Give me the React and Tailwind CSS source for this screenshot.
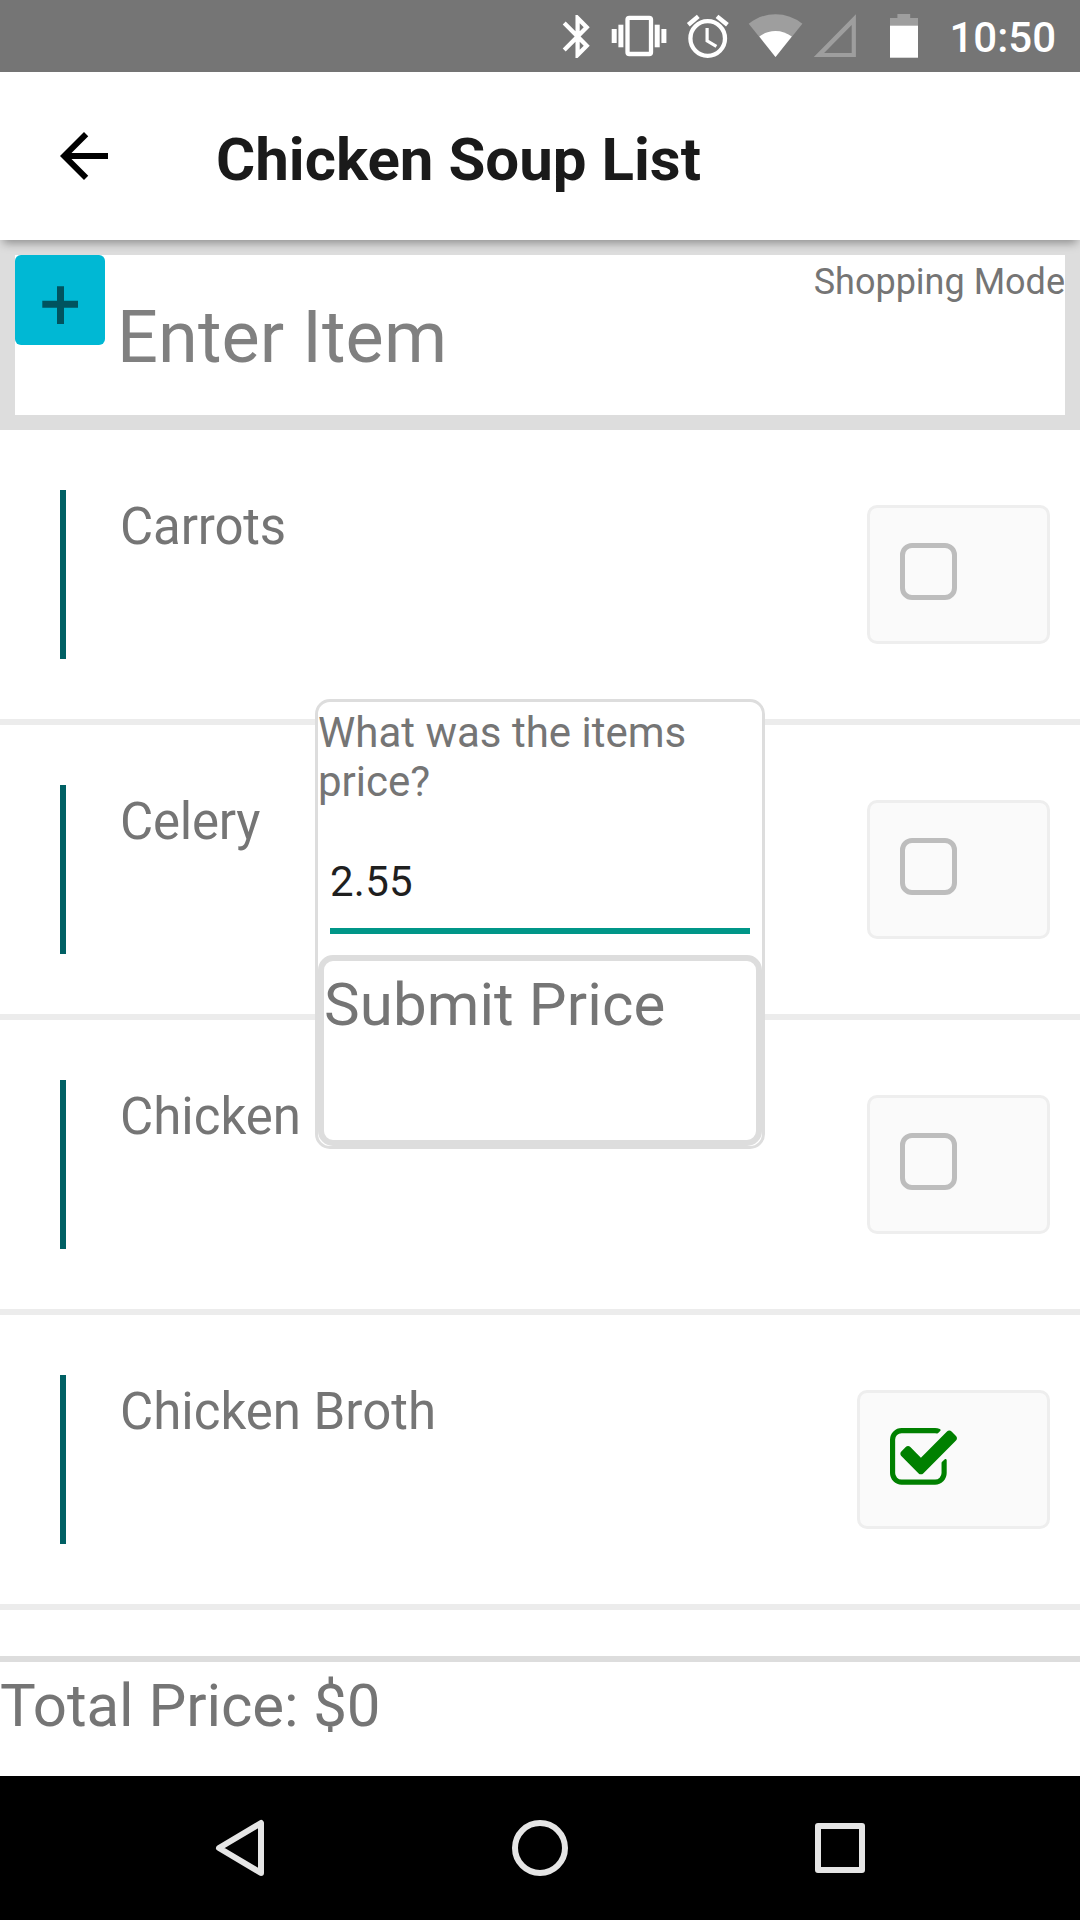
import React from "react";

const items = [
  { name: "Carrots", checked: false, spacing: "tracking-[-0.15px]" },
  { name: "Celery", checked: false, spacing: "tracking-[-0.25px]" },
  { name: "Chicken Thighs", checked: false, spacing: "[word-spacing:1.3px]" },
  { name: "Chicken Broth", checked: true, spacing: "" },
];

function StatusBar() {
  return (
    <div className="flex h-[72px] shrink-0 items-start justify-end bg-[#757575] pr-[24px] text-white">
      <svg className="h-[72px] w-[50px]" viewBox="550 0 50 72" fill="currentColor">
        <path
          transform="translate(552.1 10.7) scale(2.125 2.15)"
          d="M17.71 7.71 12 2h-1v7.59L6.41 5 5 6.41 10.59 12 5 17.59 6.41 19 11 14.41V22h1l5.71-5.71-4.3-4.29 4.3-4.29zM13 5.83l1.88 1.88L13 9.59V5.83zm1.88 10.46L13 18.17v-3.76l1.88 1.88z"
        />
      </svg>
      <svg className="h-[72px] w-[80px]" viewBox="600 0 80 72" fill="currentColor">
        <rect x="611.7" y="29" width="5" height="14" />
        <rect x="618.4" y="24.7" width="5" height="22.6" />
        <rect x="627.5" y="17.8" width="23.5" height="36.2" rx="1.8" fill="none" stroke="currentColor" strokeWidth="4.3" />
        <rect x="654.7" y="24.7" width="5" height="22.6" />
        <rect x="661.4" y="29" width="5" height="14" />
      </svg>
      <svg className="h-[72px] w-[60px]" viewBox="680 0 60 72" fill="none" stroke="currentColor">
        <circle cx="707.7" cy="38.5" r="17.3" strokeWidth="4.3" />
        <path d="M707.1 28v12.8l9.3 5.6" strokeWidth="3.2" />
        <path d="M688.3 24.8l10-8.4M717 16.4l10.4 8.4" strokeWidth="4.4" />
      </svg>
      <svg className="h-[72px] w-[70px]" viewBox="740 0 70 72" fill="currentColor">
        <path d="M775.5 57L748.7 23.8Q760.5 14.3 775.5 14.3T802.4 23.8Z" fill="#9e9e9e" />
        <path d="M775.5 57L759.3 36.6Q766.5 31 775.5 31T791.8 36.6Z" />
      </svg>
      <svg className="h-[72px] w-[60px]" viewBox="810 0 60 72">
        <path fill="#9e9e9e" fillRule="evenodd" d="M813.8 57L855.9 14.3V57ZM824.1 53H851.7V25Z" />
      </svg>
      <svg className="h-[72px] w-[60px]" viewBox="870 0 60 72">
        <path fill="#9e9e9e" d="M890 26v-8h7.4v-4h12.8v4H918v8z" />
        <rect x="890" y="25.7" width="28" height="32" fill="white" />
      </svg>
      <div className="w-[126px] pt-[13px] text-right text-[42px] leading-[49px] font-medium">10:50</div>
    </div>
  );
}

function Header() {
  return (
    <header className="relative z-10 flex h-[168px] shrink-0 items-start bg-white pl-12 shadow-[0_6px_9px_-3px_rgba(0,0,0,0.36)]">
      <svg className="mt-12 size-[72px]" viewBox="0 0 24 24">
        <path d="M20 11H7.83l5.59-5.59L12 4l-8 8 8 8 1.41-1.41L7.83 13H20v-2z" />
      </svg>
      <h1 className="mt-[53px] ml-24 text-[60px] leading-[70px] font-bold text-[#1a1a1a]">Chicken Soup List</h1>
    </header>
  );
}

function AddItem() {
  return (
    <div className="flex h-[190px] shrink-0 items-start border-[15px] border-[#ddd] bg-white">
      <button className="size-[90px] rounded-[6px] bg-[#00b8d4]">
        <svg className="size-[90px]" viewBox="0 0 90 90" fill="#00535f">
          <path d="M42 31.3h7v14.4h14v7H49V69h-7V52.700h-14.700v-7H42z" />
        </svg>
      </button>
      <div className="mt-[41px] ml-[12px] text-[72px] leading-[84px] tracking-[0.1px] text-[#808080]">Enter Item</div>
      <div className="mt-[6px] ml-auto text-[36px] leading-[42px] text-[#757575]">Shopping Mode</div>
    </div>
  );
}

function CheckIcon({ checked }) {
  if (!checked) {
    return <div className="size-[57px] rounded-[12px] border-[5px] border-[#bdbdbd]" />;
  }
  return (
    <svg className="h-[57px] w-[67px]" viewBox="64 128 1664 1408" preserveAspectRatio="xMinYMin meet" fill="#008000">
      <path d="M1472 930v318q0 119-84.500 203.500t-203.500 84.500h-832q-119 0-203.500-84.500t-84.500-203.500v-832q0-119 84.500-203.500t203.500-84.500h832q63 0 117 25 15 7 18 23 3 17-9 29l-49 49q-10 10-23 10-3 0-9-2-23-6-45-6h-832q-66 0-113 47t-47 113v832q0 66 47 113t113 47h832q66 0 113-47t47-113v-254q0-13 9-22l64-64q10-10 23-10 6 0 12 3 20 8 20 29zm231-489l-814 814q-24 24-57 24t-57-24l-430-430q-24-24-24-57t24-57l110-110q24-24 57-24t57 24l263 263 647-647q24-24 57-24t57 24l110 110q24 24 24 57t-24 57z" />
    </svg>
  );
}

function ItemRow({ name, checked, spacing }) {
  return (
    <li className="flex h-[295px] shrink-0 items-start border-b-[6px] border-[#ececec] pt-[60px] pr-[30px] pl-[60px]">
      <div className="flex h-[169px] flex-1 border-l-[6px] border-[#006064] pl-[54px]">
        <span className={`mt-[7px] text-[51px] leading-[60px] text-[#757575] ${spacing}`}>{name}</span>
      </div>
      <button className="mt-[15px] flex h-[139px] items-start rounded-[10px] border-[3px] border-[#eee] bg-[#fafafa] pt-[35px] pr-[90px] pl-[30px]">
        <CheckIcon checked={checked} />
      </button>
    </li>
  );
}

function PriceDialog() {
  return (
    <div className="absolute top-[699px] left-[315px] z-20 flex size-[450px] flex-col rounded-[15px] border-[3px] border-[#ddd] bg-white">
      <p className="mt-[6px] text-[42px] leading-[49px] text-[#757575]">What was the items price?</p>
      <div className="mx-3 mt-[51px] h-[77px] border-b-[6px] border-[#009688] text-[42px] leading-[49px] tracking-[0.25px] text-[#1f1f1f]">
        2.55
      </div>
      <button className="mt-[21px] flex flex-1 items-start rounded-[15px] border-[6px] border-[#ddd] pt-[9px] text-[60px] leading-[70px] tracking-[0.1px] text-[#757575]">
        Submit Price
      </button>
    </div>
  );
}

function NavBar() {
  return (
    <nav className="flex h-[144px] shrink-0 items-center justify-center gap-[240px] bg-black">
      <svg className="size-[60px]" viewBox="0 0 60 60" fill="none" stroke="#e5e5e5" strokeWidth="6" strokeLinejoin="round">
        <path d="M51 5V55L9 30Z" />
      </svg>
      <svg className="size-[60px]" viewBox="0 0 60 60" fill="none" stroke="#e5e5e5" strokeWidth="6">
        <circle cx="30" cy="30" r="25" />
      </svg>
      <svg className="size-[60px]" viewBox="0 0 60 60" fill="none" stroke="#e5e5e5" strokeWidth="6" strokeLinejoin="round">
        <rect x="8" y="8" width="44" height="44" />
      </svg>
    </nav>
  );
}

export default function App() {
  return (
    <div className="relative flex h-[1920px] w-[1080px] flex-col overflow-hidden bg-white font-['Roboto',sans-serif]">
      <StatusBar />
      <Header />
      <AddItem />
      <ul className="flex min-h-0 flex-1 flex-col overflow-hidden">
        {items.map((item) => (
          <ItemRow key={item.name} {...item} />
        ))}
      </ul>
      <footer className="h-[120px] shrink-0 border-t-[6px] border-[#ddd] bg-white pt-[9px] text-[60px] leading-[70px] tracking-[-0.08px] text-[#757575]">
        Total Price: $0
      </footer>
      <NavBar />
      <PriceDialog />
    </div>
  );
}
